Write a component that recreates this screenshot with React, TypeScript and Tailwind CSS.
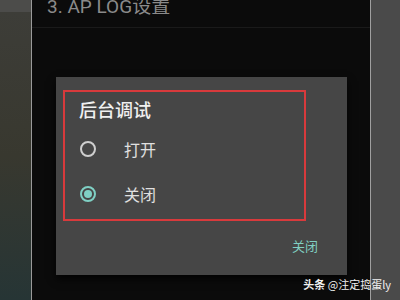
import React from "react";

function Radio({ checked }: { checked: boolean }) {
  if (checked) {
    return (
      <div className="w-[16px] h-[16px] rounded-full border-2 border-[#7fd0c4] flex items-center justify-center">
        <div className="w-[8px] h-[8px] rounded-full bg-[#7fd0c4]" />
      </div>
    );
  }
  return <div className="w-[16px] h-[16px] rounded-full border-2 border-[#cfcfcf]" />;
}

export default function App() {
  return (
    <div
      className="w-[400px] h-[300px] flex overflow-hidden bg-[#0b0b0b]"
      style={{ fontFamily: '"Noto Sans CJK SC", "Noto Sans", sans-serif' }}
    >
      {/* left strip */}
      <div className="w-[31px] h-full flex flex-col">
        <div className="h-[12px] bg-[#4c4c4a]" />
        <div className="flex-1 bg-gradient-to-b from-[#3d3d38] via-[#38382f] to-[#263535]" />
      </div>
      <div className="w-[1px] h-full bg-[#9a9a9a]" />
      {/* middle */}
      <div className="w-[338px] h-full flex flex-col bg-[#0b0b0b]">
        <div className="h-[28px] border-b border-[#1a1a1a] pl-[15px]">
          <div
            className="text-[19px] leading-[19px] mt-[-3px] text-[#8a8a8a]"
            style={{ fontFamily: 'Roboto, "Noto Sans CJK SC", sans-serif' }}
          >
            3. AP LOG设置
          </div>
        </div>
        <div className="pl-[24px] pt-[49px]">
          <div className="w-[291px] h-[198px] bg-[#464646] pt-[13px] pl-[7px] shadow-[0_4px_8px_rgba(0,0,0,0.8)]">
            <div className="w-[243px] h-[131px] border-2 border-[#d83a3c] pl-[14px] pt-[6px]">
              <div className="text-[18px] leading-[22px] text-[#f0f0f0] font-medium">后台调试</div>
              <div className="flex items-center h-[20px] mt-[19px]">
                <div className="ml-[1px]"><Radio checked={false} /></div>
                <span className="ml-[28px] text-[16px] text-[#e0e0e0]">打开</span>
              </div>
              <div className="flex items-center h-[20px] mt-[25px]">
                <div className="ml-[1px]"><Radio checked={true} /></div>
                <span className="ml-[28px] text-[16px] text-[#e0e0e0]">关闭</span>
              </div>
            </div>
            <div className="flex justify-end pr-[29px] mt-[17px]">
              <span className="text-[13px] leading-[16px] text-[#80cfc2]">关闭</span>
            </div>
          </div>
        </div>
        <div className="flex justify-end mt-[2px]">
          <span className="text-[11px] leading-[14px] text-[#f0f0f0] mr-[-21px] relative z-10">
            <span className="font-bold">头条</span> @注定捣蛋ly
          </span>
        </div>
      </div>
      <div className="w-[1px] h-full bg-[#a0a0a0]" />
      <div className="flex-1 h-full bg-[#4a4a4a]" />
    </div>
  );
}
